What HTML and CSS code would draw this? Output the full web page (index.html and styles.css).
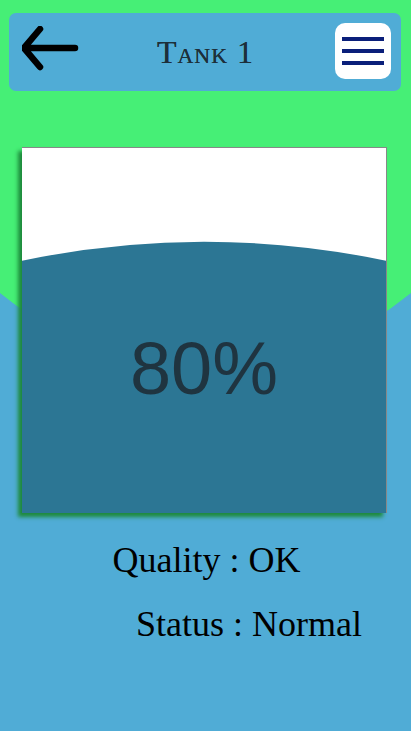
FILE: index.html
```html
<!DOCTYPE html>
<html lang="en">
<head>
    <meta charset="UTF-8">
    <meta name="viewport" content="width=device-width, initial-scale=1.0">
    <title>Tank 1</title>
    <link rel="stylesheet" href="styles.css">
</head>
<body>
    <svg class="fondo" viewBox="0 0 411 731" preserveAspectRatio="none">
        <path d="M0,293 Q205.5,457 411,293 L411,731 L0,731 Z" fill="#50acd6"/>
    </svg>
    <div class="pagina">
        <header class="barra">
            <a class="atras" href="#">
                <svg width="58" height="48" viewBox="0 0 58 48">
                    <path d="M18,3 L2,22 L18,41 M2,22 L53,22" fill="none" stroke="#000" stroke-width="6.5" stroke-linecap="round" stroke-linejoin="round"/>
                </svg>
            </a>
            <h1 class="titulo">Tank 1</h1>
            <button class="menu">
                <span></span><span></span><span></span>
            </button>
        </header>

        <div class="tanque">
            <svg class="agua" viewBox="0 0 365 366" preserveAspectRatio="none">
                <path d="M0,113 Q182.5,75 365,113 L365,366 L0,366 Z" fill="#2c7694"/>
            </svg>
            <span class="nivel">80%</span>
        </div>

        <p class="dato calidad">Quality : OK</p>
        <p class="dato estado">Status : Normal</p>
    </div>
</body>
</html>
```

FILE: styles.css
```css
body {
    margin: 0;
    padding: 0;
    background-color: #46ef76;
    font-family: "Liberation Serif", serif;
    min-height: 731px;
    position: relative;
    overflow: hidden;
}

.fondo {
    position: absolute;
    top: 0;
    left: 0;
    width: 411px;
    height: 731px;
}

.pagina {
    position: relative;
    display: flex;
    flex-direction: column;
}

.barra {
    margin: 13px 10px 0 9px;
    height: 78px;
    background-color: #50acd6;
    border-radius: 7px;
    display: flex;
    align-items: center;
    justify-content: space-between;
    padding: 0 10px 0 13px;
}

.atras {
    display: flex;
    margin-top: -4px;
}

.titulo {
    margin: 0;
    font-size: 32px;
    font-weight: normal;
    font-variant: small-caps;
    letter-spacing: 1px;
    color: #1d2f3a;
    margin-left: -4px;
    text-shadow: 0 0 0.5px #1d2f3a;
}

.menu {
    width: 56px;
    height: 56px;
    border: none;
    border-radius: 10px;
    background-color: #fff;
    display: flex;
    flex-direction: column;
    justify-content: center;
    gap: 8px;
    padding: 0 7px;
    margin-top: -2px;
}

.menu span {
    display: block;
    height: 4px;
    width: 42px;
    background-color: #0a1f7a;
}

.tanque {
    position: relative;
    margin: 56px 0 0 22px;
    width: 365px;
    height: 366px;
    background-color: #fff;
    border-top: 1px solid #888;
    border-right: 1px solid #888;
    box-sizing: border-box;
    box-shadow: -4px 4px 4px #1e8a3c;
    display: flex;
    justify-content: center;
    padding-top: 184px;
}

.agua {
    position: absolute;
    top: 0;
    left: 0;
    width: 100%;
    height: 100%;
}

.nivel {
    position: relative;
    font-family: "Liberation Sans", Arial, sans-serif;
    font-size: 74px;
    line-height: 1;
    color: #1f3440;
}

.dato {
    margin: 0;
    font-size: 36px;
    color: #000;
}

.calidad {
    margin-top: 26px;
    text-align: center;
    padding-left: 2px;
}

.estado {
    margin-top: 22px;
    padding-left: 136px;
}
```
